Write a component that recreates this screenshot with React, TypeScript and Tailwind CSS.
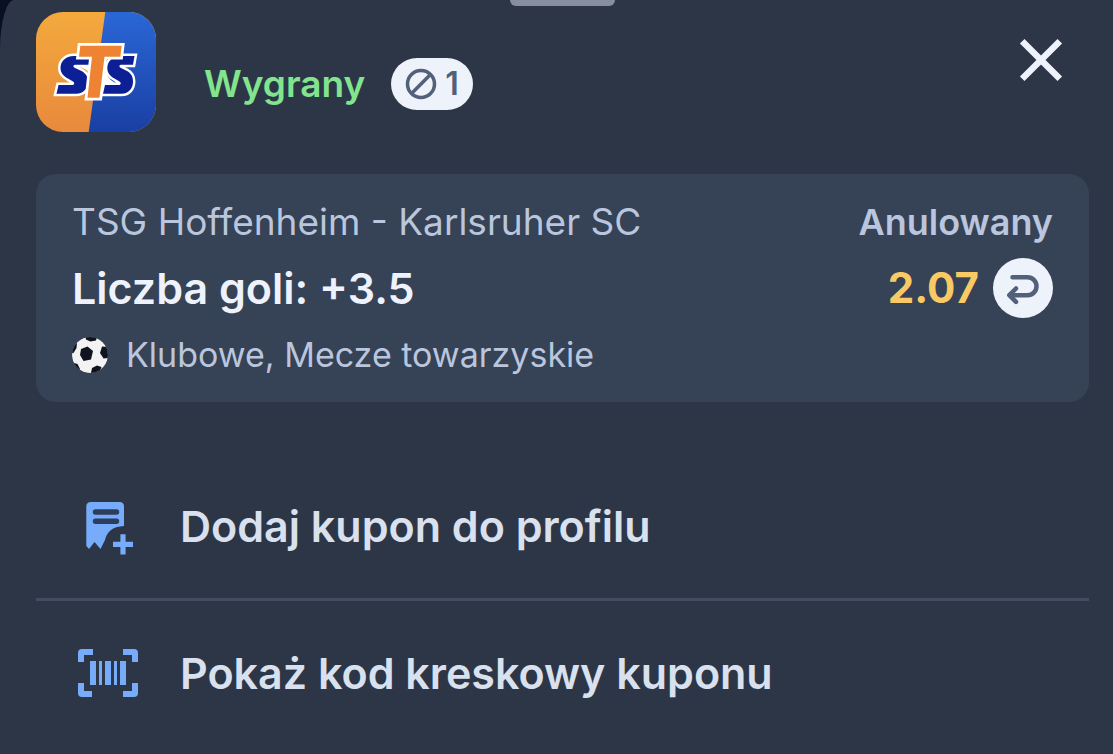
import type { ReactNode } from "react";

function StsLogo() {
  return (
    <svg viewBox="0 0 120 120" className="size-[120px] shrink-0" role="img" aria-label="STS">
      <defs>
        <linearGradient id="orange" x1="0" y1="0" x2="0" y2="1">
          <stop offset="0" stopColor="#f4a93c" />
          <stop offset="1" stopColor="#e8893c" />
        </linearGradient>
        <linearGradient id="blue" x1="0" y1="0" x2="0" y2="1">
          <stop offset="0" stopColor="#2a67d6" />
          <stop offset="1" stopColor="#1a3fa3" />
        </linearGradient>
        <clipPath id="tile">
          <rect width="120" height="120" rx="27" />
        </clipPath>
      </defs>
      <g clipPath="url(#tile)">
        <rect width="120" height="120" fill="url(#orange)" />
        <path d="M69.3 0H120V120H52.7Z" fill="url(#blue)" />
      </g>
      <g fill="#0c1f94" stroke="#fff" strokeWidth="5" paintOrder="stroke">
        <path d="M54 44H38C29 44 24.5 50 24.5 56C24.5 61 28 64.5 32 66.5L37 69.5C39 71 38.5 73 36 73H22.5L20.5 81.7H40C48 81.7 52 76 52 69.5C52 64 49 61 45 58.8L39 56C36.5 54.5 37 52.7 40 52.7H53Z" />
        <path d="M98.5 44H85C76 44 71.3 50 71.3 56C71.3 61 74.500 64.500 78.500 66.500L83.500 69.500C85.500 71 85 73 82.500 73H69L67 81.700H85.500C93 81.700 97 76 97 69.500C97 64 94.500 61 90.500 58.800L85 56C82.500 54.500 83 52.700 86 52.700H97Z" />
      </g>
      <path d="M44 53.5H56V64Q53 58 44 55ZM70 46L67 72L79 71Q70 66 70 57Z" fill="#fff" />
      <path
        d="M44.300 33.700H85.700L84.300 44.700H68.500L63.500 85.700H51.500L56 44.700H43Z"
        fill="#ee8433"
        stroke="#fff"
        strokeWidth="5.500"
        paintOrder="stroke"
      />
    </svg>
  );
}

function BanIcon() {
  return (
    <svg viewBox="0 0 32 32" className="size-8" fill="none" stroke="#536079" strokeWidth="3.5">
      <circle cx="16" cy="16" r="13.5" />
      <path d="M6.8 25.2L25.2 6.8" />
    </svg>
  );
}

function CloseIcon() {
  return (
    <svg viewBox="0 0 44 44" className="size-11" fill="none" stroke="#edf2fc" strokeWidth="6.5">
      <path d="M3.200 3.200L40.800 40.800M40.800 3.200L3.200 40.800" />
    </svg>
  );
}

function ReturnIcon() {
  return (
    <svg
      viewBox="0 0 60 60"
      className="size-[60px]"
      fill="none"
      stroke="#536079"
      strokeWidth="4.500"
      strokeLinecap="round"
      strokeLinejoin="round"
    >
      <path d="M19.500 19.200H34.500A9 9 0 0 1 34.500 37.200H17" />
      <path d="M23 30.500L16.300 37.200L23 43.900" />
    </svg>
  );
}

function BallIcon() {
  return (
    <svg viewBox="0 0 36 36" className="size-9 shrink-0">
      <defs>
        <clipPath id="ball">
          <circle cx="18" cy="18" r="18" />
        </clipPath>
      </defs>
      <g clipPath="url(#ball)">
        <circle cx="18" cy="18" r="18" fill="#f3f3f3" />
        <g fill="#10141f">
          <path d="M9 12L15.500 9.500L21 14L19 22.500L11.500 24L8 18Z" />
          <path d="M13.500 0H25L24 3.500L18.500 4.500L14 2.500Z" />
          <path d="M30 9.500L36 10V21L31.500 21.500L28 16Z" />
          <path d="M0 8L5 6L4.500 11L1.500 16L0 16Z" />
          <path d="M0 25.500L5.500 27L8 32L6 36L0 30Z" />
          <path d="M20 31L25 28.500L29.500 30L27 36H19Z" />
        </g>
      </g>
    </svg>
  );
}

function CouponAddIcon() {
  return (
    <svg viewBox="0 0 60 60" className="size-[60px] shrink-0">
      <path
        d="M13 6H41.500Q46 6 46 10.500V30C34 30.500 29 36 27 44L22.500 53L16.500 46L11 53L8.300 50V10.500Q8.300 6 13 6Z"
        fill="#76acf9"
      />
      <path d="M17.500 16H38.500M17.500 25.300H38.500" stroke="#2c3e5c" strokeWidth="5.400" strokeLinecap="round" />
      <path d="M45 38.200V58.500M35 48.300H55" stroke="#76acf9" strokeWidth="5.200" />
    </svg>
  );
}

function BarcodeIcon() {
  return (
    <svg viewBox="0 0 60 60" className="size-[60px] shrink-0" fill="#76acf9">
      <path d="M0 19V10Q0 6 4 6H15V12H6V19Z" />
      <path d="M60 19V10Q60 6 56 6H45V12H54V19Z" />
      <path d="M0 40V50Q0 54 4 54H14V48H6V40Z" />
      <path d="M60 40V50Q60 54 56 54H45V48H54V40Z" />
      <path d="M12 18H18V42H12ZM21 18H24V42H21ZM27 18H33V42H27ZM36 18H39V42H36ZM42 18H48V42H42Z" />
    </svg>
  );
}

function ActionRow({ icon, label }: { icon: ReactNode; label: string }) {
  return (
    <button
      type="button"
      className="flex w-full items-center gap-[42px] px-[42px] py-[42px] text-left text-[43px] leading-[60px] font-semibold text-[#d9e0ee]"
    >
      {icon}
      <span>{label}</span>
    </button>
  );
}

export default function App() {
  return (
    <div className="min-h-screen bg-[#0a1024] font-['Inter',sans-serif]">
      <div className="relative min-h-screen rounded-tl-[14px_50px] bg-[#2d3647] pt-3 pr-6 pl-9">
        {/* Drag handle */}
        <div className="absolute top-0 left-[510px] h-[6px] w-[105px] rounded-b-[6px] bg-[#878e9f]" />

        <header className="flex items-start justify-between">
          <div className="flex items-center">
            <StsLogo />
            <div className="mt-6 ml-12 flex items-center gap-[26px]">
              <h1 className="text-[37px] leading-[48px] font-semibold text-[#82e58d]">Wygrany</h1>
              <span className="flex h-[52px] items-center gap-2 rounded-full bg-[#edf2fb] px-[14px] text-[32px] font-semibold text-[#536079]">
                <BanIcon />
                1
              </span>
            </div>
          </div>
          <button type="button" aria-label="Zamknij" className="mt-[26px] mr-[26px]">
            <CloseIcon />
          </button>
        </header>

        {/* Bet */}
        <section className="mt-[42px] rounded-[20px] bg-[#364255] px-9 pt-6 pb-[22px] text-[#bac6dd]">
          <div className="flex items-center justify-between leading-[48px]">
            <p className="text-[37px]">TSG Hoffenheim - Karlsruher SC</p>
            <p className="text-[36px] font-semibold">Anulowany</p>
          </div>
          <div className="mt-3 flex items-center justify-between leading-[60px]">
            <h2 className="text-[43px] font-semibold text-[#edf2fc]">Liczba goli: +3.5</h2>
            <div className="flex items-center gap-[14px]">
              <span className="text-[42px] font-bold text-[#f9c965]">2.07</span>
              <span className="rounded-full bg-[#edf2fb]">
                <ReturnIcon />
              </span>
            </div>
          </div>
          <div className="mt-3 flex items-center gap-[18px] text-[34px] leading-[50px]">
            <BallIcon />
            <p>Klubowe, Mecze towarzyskie</p>
          </div>
        </section>

        {/* Actions */}
        <nav className="mt-[52px]">
          <ActionRow icon={<CouponAddIcon />} label="Dodaj kupon do profilu" />
          <hr className="border-t-[3px] border-[#444d5f]" />
          <ActionRow icon={<BarcodeIcon />} label="Pokaż kod kreskowy kuponu" />
        </nav>
      </div>
    </div>
  );
}
